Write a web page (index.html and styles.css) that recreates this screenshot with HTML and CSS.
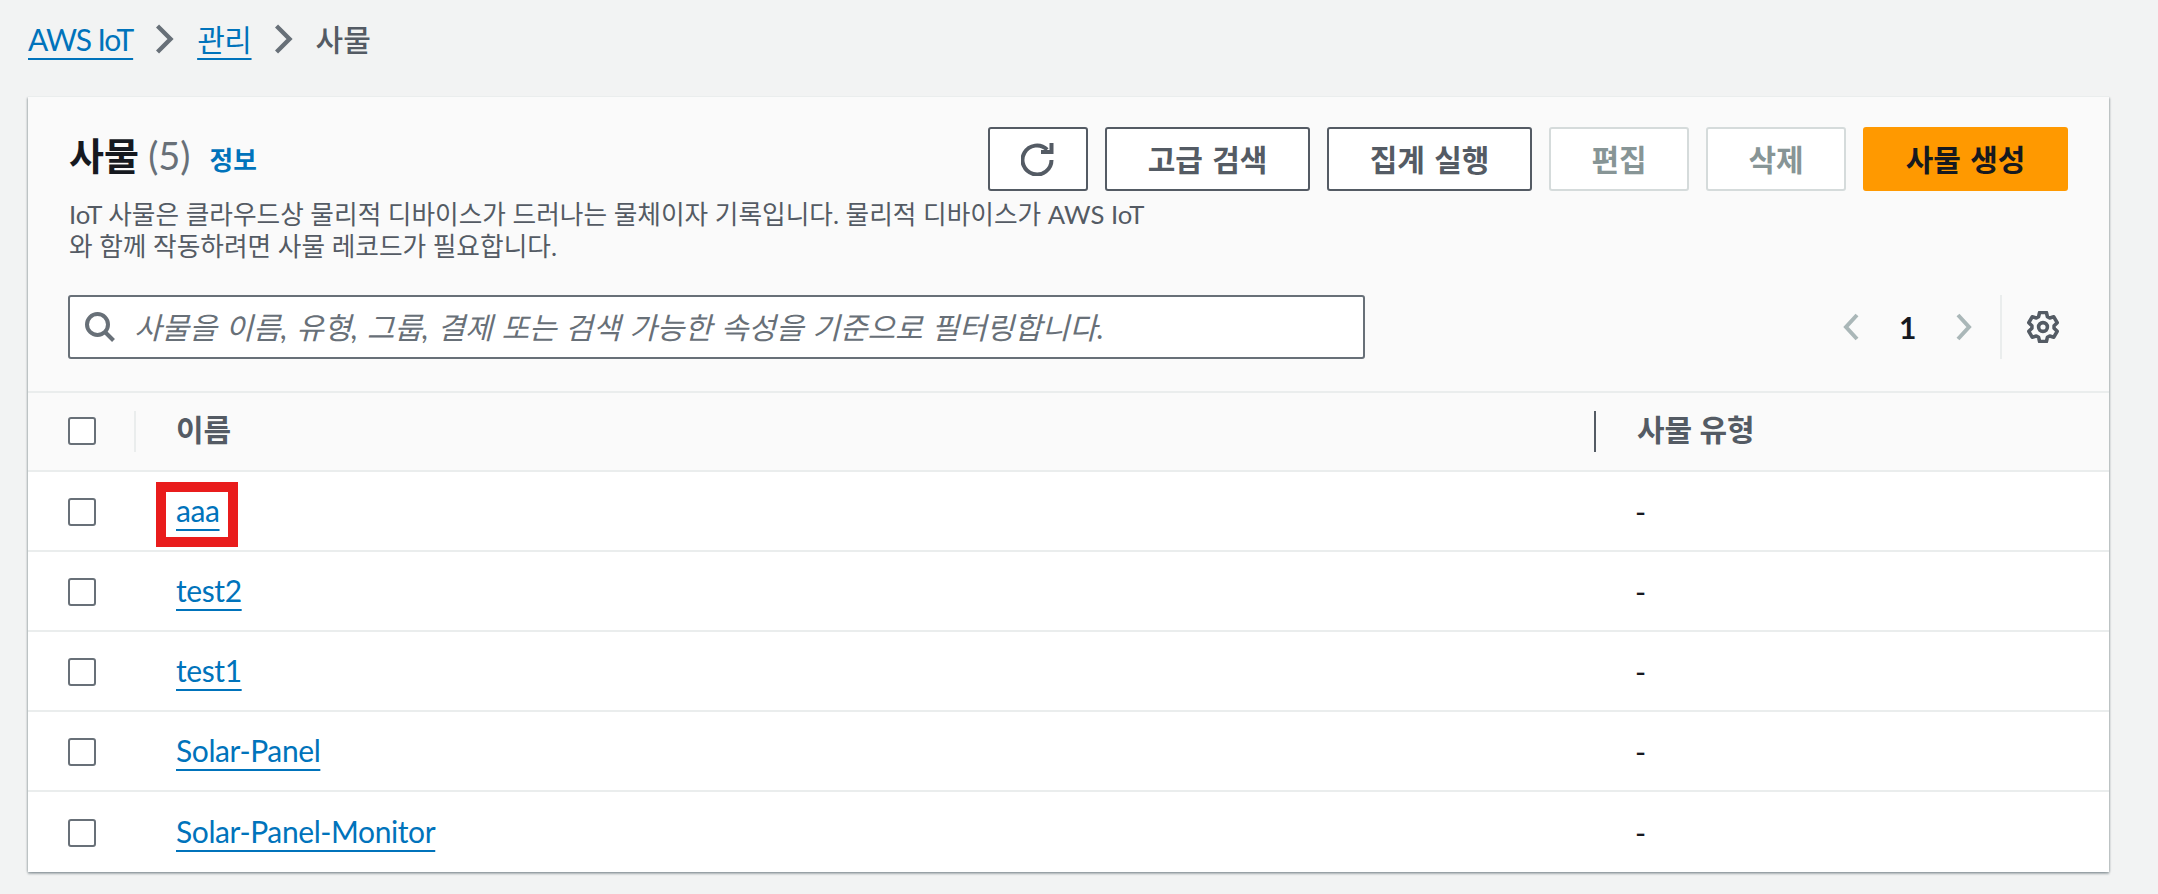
FILE: index.html
```html
<!DOCTYPE html>
<html lang="ko">
<head>
<meta charset="utf-8">
<title>사물</title>
<link rel="stylesheet" href="styles.css">
</head>
<body>
<nav class="crumbs">
  <a class="link link-tight" href="#">AWS IoT</a>
  <svg class="crumb-sep" viewBox="0 0 18 30"><path d="M1.5 2l13 13-13 13"/></svg>
  <a class="link" href="#">관리</a>
  <svg class="crumb-sep" viewBox="0 0 18 30"><path d="M1.5 2l13 13-13 13"/></svg>
  <span class="crumb-current">사물</span>
</nav>
<section class="card">
  <header class="card-head">
    <div class="head-intro">
      <div class="head-top">
        <h1 class="title">사물 <span class="count">(5)</span><a class="info" href="#">정보</a></h1>
        <div class="actions">
          <button class="btn btn-icon"><svg class="refresh" viewBox="0 0 34 33"><path d="M30.5 17A14.5 14.5 0 1 1 26.2 6.7"/><path d="M20 9H30.5V0"/></svg></button>
          <button class="btn btn-wide">고급 검색</button>
          <button class="btn btn-wide">집계 실행</button>
          <button class="btn btn-off">편집</button>
          <button class="btn btn-off">삭제</button>
          <button class="btn btn-primary">사물 생성</button>
        </div>
      </div>
      <p class="desc">IoT 사물은 클라우드상 물리적 디바이스가 드러나는 물체이자 기록입니다. 물리적 디바이스가 AWS IoT 와 함께 작동하려면 사물 레코드가 필요합니다.</p>
    </div>
    <div class="head-tools">
      <div class="search">
        <svg class="search-icon" viewBox="0 0 30 30"><circle cx="12.5" cy="12.5" r="10.5"/><path d="M20 20l8.5 8.5"/></svg>
        <span class="placeholder">사물을 이름, 유형, 그룹, 결제 또는 검색 가능한 속성을 기준으로 필터링합니다.</span>
      </div>
      <div class="pager">
        <svg class="pg-arrow" viewBox="0 0 16 28"><path d="M14 2L3 14l11 12"/></svg>
        <span class="pg-num">1</span>
        <svg class="pg-arrow" viewBox="0 0 16 28"><path d="M2 2l11 12L2 26"/></svg>
      </div>
      <div class="prefs">
        <svg class="gear" viewBox="0 0 32 32"><path d="M12.6 2.5h6.8l1 4.2 2.3 1.3 4.1-1.2 3.4 5.9-3.1 3 0 2.6 3.1 3-3.4 5.9-4.1-1.2-2.3 1.3-1 4.2h-6.8l-1-4.2-2.3-1.3-4.1 1.2-3.4-5.9 3.1-3 0-2.6-3.1-3 3.4-5.9 4.1 1.2 2.3-1.3z" transform="translate(0 -1)"/><circle cx="16" cy="16" r="4.4"/></svg>
      </div>
    </div>
  </header>
  <div class="row row-head">
    <div class="cell-check cell-check-head"><span class="checkbox"></span></div>
    <div class="cell-name">이름</div>
    <div class="cell-type cell-type-head">사물 유형</div>
  </div>
  <div class="row">
    <div class="cell-check"><span class="checkbox"></span></div>
    <div class="cell-name"><a class="link marked" href="#">aaa</a></div>
    <div class="cell-type">-</div>
  </div>
  <div class="row">
    <div class="cell-check"><span class="checkbox"></span></div>
    <div class="cell-name"><a class="link" href="#">test2</a></div>
    <div class="cell-type">-</div>
  </div>
  <div class="row">
    <div class="cell-check"><span class="checkbox"></span></div>
    <div class="cell-name"><a class="link" href="#">test1</a></div>
    <div class="cell-type">-</div>
  </div>
  <div class="row">
    <div class="cell-check"><span class="checkbox"></span></div>
    <div class="cell-name"><a class="link" href="#">Solar-Panel</a></div>
    <div class="cell-type">-</div>
  </div>
  <div class="row row-last">
    <div class="cell-check"><span class="checkbox"></span></div>
    <div class="cell-name"><a class="link" href="#">Solar-Panel-Monitor</a></div>
    <div class="cell-type">-</div>
  </div>
</section>
</body>
</html>
```
FILE: styles.css
```css
*, *::before, *::after { box-sizing: border-box; }
html, body { margin: 0; height: 100%; }
body {
  background: #f2f3f3;
  color: #16191f;
  font-family: Lato, "Noto Sans CJK KR", sans-serif;
  font-size: 30px;
  line-height: 42px;
  padding: 0 49px 0 28px;
  overflow: hidden;
}
.link {
  color: #0073bb;
  letter-spacing: -0.4px;
  text-decoration: underline;
  text-decoration-thickness: 2px;
  text-underline-offset: 7px;
}
.link-tight { letter-spacing: -1.1px; }
.crumbs {
  display: flex;
  align-items: center;
  height: 96px;
  padding-bottom: 18px;
  gap: 23px;
}
.crumb-sep { width: 18px; height: 30px; fill: none; stroke: #687078; stroke-width: 4.4; }
.crumb-current { color: #545b64; font-weight: 500; }
.card {
  background: #fff;
  box-shadow: 0 2px 2px 0 rgba(0,28,36,.3), 2px 1px 2px -1px rgba(0,28,36,.2), -2px 1px 2px -1px rgba(0,28,36,.2);
}
.card-head {
  background: #fafafa;
  height: 297px;
  padding: 30px 41px 0 40px;
  border-top: 1px solid #eaeded;
  border-bottom: 2px solid #eaeded;
}
.head-intro { height: 168px; }
.head-top { display: flex; justify-content: space-between; height: 64px; }
.title { margin: 6px 0 0 1px; font-size: 38px; line-height: 44px; font-weight: 700; }
.count { font-weight: 400; color: #687078; }
.info { color: #0073bb; font-size: 25.7px; margin-left: 19px; text-decoration: none; }
.desc { width: 1092px; margin: 7px 0 0 1px; font-size: 25.7px; line-height: 32px; color: #545b64; }
.actions { display: flex; gap: 17px; }
.btn {
  height: 64px;
  border: 2px solid #545b64;
  border-radius: 3px;
  background: #fff;
  color: #545b64;
  font: 700 30px/42px Lato, "Noto Sans CJK KR", sans-serif;
  word-spacing: 2px;
  padding: 0;
  display: flex;
  align-items: center;
  justify-content: center;
}
.btn-icon { width: 100px; }
.refresh { width: 34px; height: 33px; fill: none; stroke: #545b64; stroke-width: 4; }
.btn-wide { width: 205px; }
.btn-off { width: 140px; border-color: #d5dbdb; color: #879596; }
.btn-primary { width: 205px; background: #ff9900; border-color: #ff9900; color: #16191f; }
.head-tools { display: flex; align-items: center; }
.search {
  width: 1297px;
  height: 64px;
  background: #fff;
  border: 2px solid #687078;
  border-radius: 3px;
  display: flex;
  align-items: center;
  padding-left: 15px;
  gap: 19px;
}
.search-icon { width: 30px; height: 30px; fill: none; stroke: #687078; stroke-width: 4; }
.placeholder { font-style: italic; color: #687078; word-spacing: 1.7px; }
.pager { display: flex; align-items: center; margin-left: 478px; gap: 40px; }
.pg-arrow { width: 16px; height: 28px; fill: none; stroke: #aab7b8; stroke-width: 4; }
.pg-num { font-weight: 700; }
.prefs { margin-left: 28px; height: 64px; border-left: 2px solid #eaeded; padding-left: 25px; display: flex; align-items: center; }
.gear { width: 32px; height: 32px; fill: none; stroke: #545b64; stroke-width: 3.6; stroke-linejoin: round; }
.row {
  display: grid;
  grid-template-columns: 108px 1458px 1fr;
  align-items: center;
  height: 80px;
  border-bottom: 2px solid #eaeded;
}
.row-head { height: 79px; background: #fafafa; font-weight: 700; color: #545b64; }
.row-last { border-bottom: 0; }
.cell-check { padding: 1px 0 0 40px; height: 41px; display: flex; align-items: center; }
.cell-check-head { padding: 0 0 1px 40px; border-right: 2px solid #eaeded; }
.cell-name { padding: 0 0 2px 40px; }
.row-head .cell-name { padding-bottom: 5px; }
.cell-type { padding-left: 41px; }
.cell-type-head { border-left: 2px solid #545b64; height: 41px; display: flex; align-items: center; padding-bottom: 5px; }
.checkbox { display: block; width: 28px; height: 28px; background: #fff; border: 2px solid #687078; border-radius: 3px; }
.marked { position: relative; }
.marked::after {
  content: "";
  position: absolute;
  left: -20px;
  top: -10px;
  width: 82px;
  height: 65px;
  border: 10px solid #e91c1c;
  pointer-events: none;
}
```
